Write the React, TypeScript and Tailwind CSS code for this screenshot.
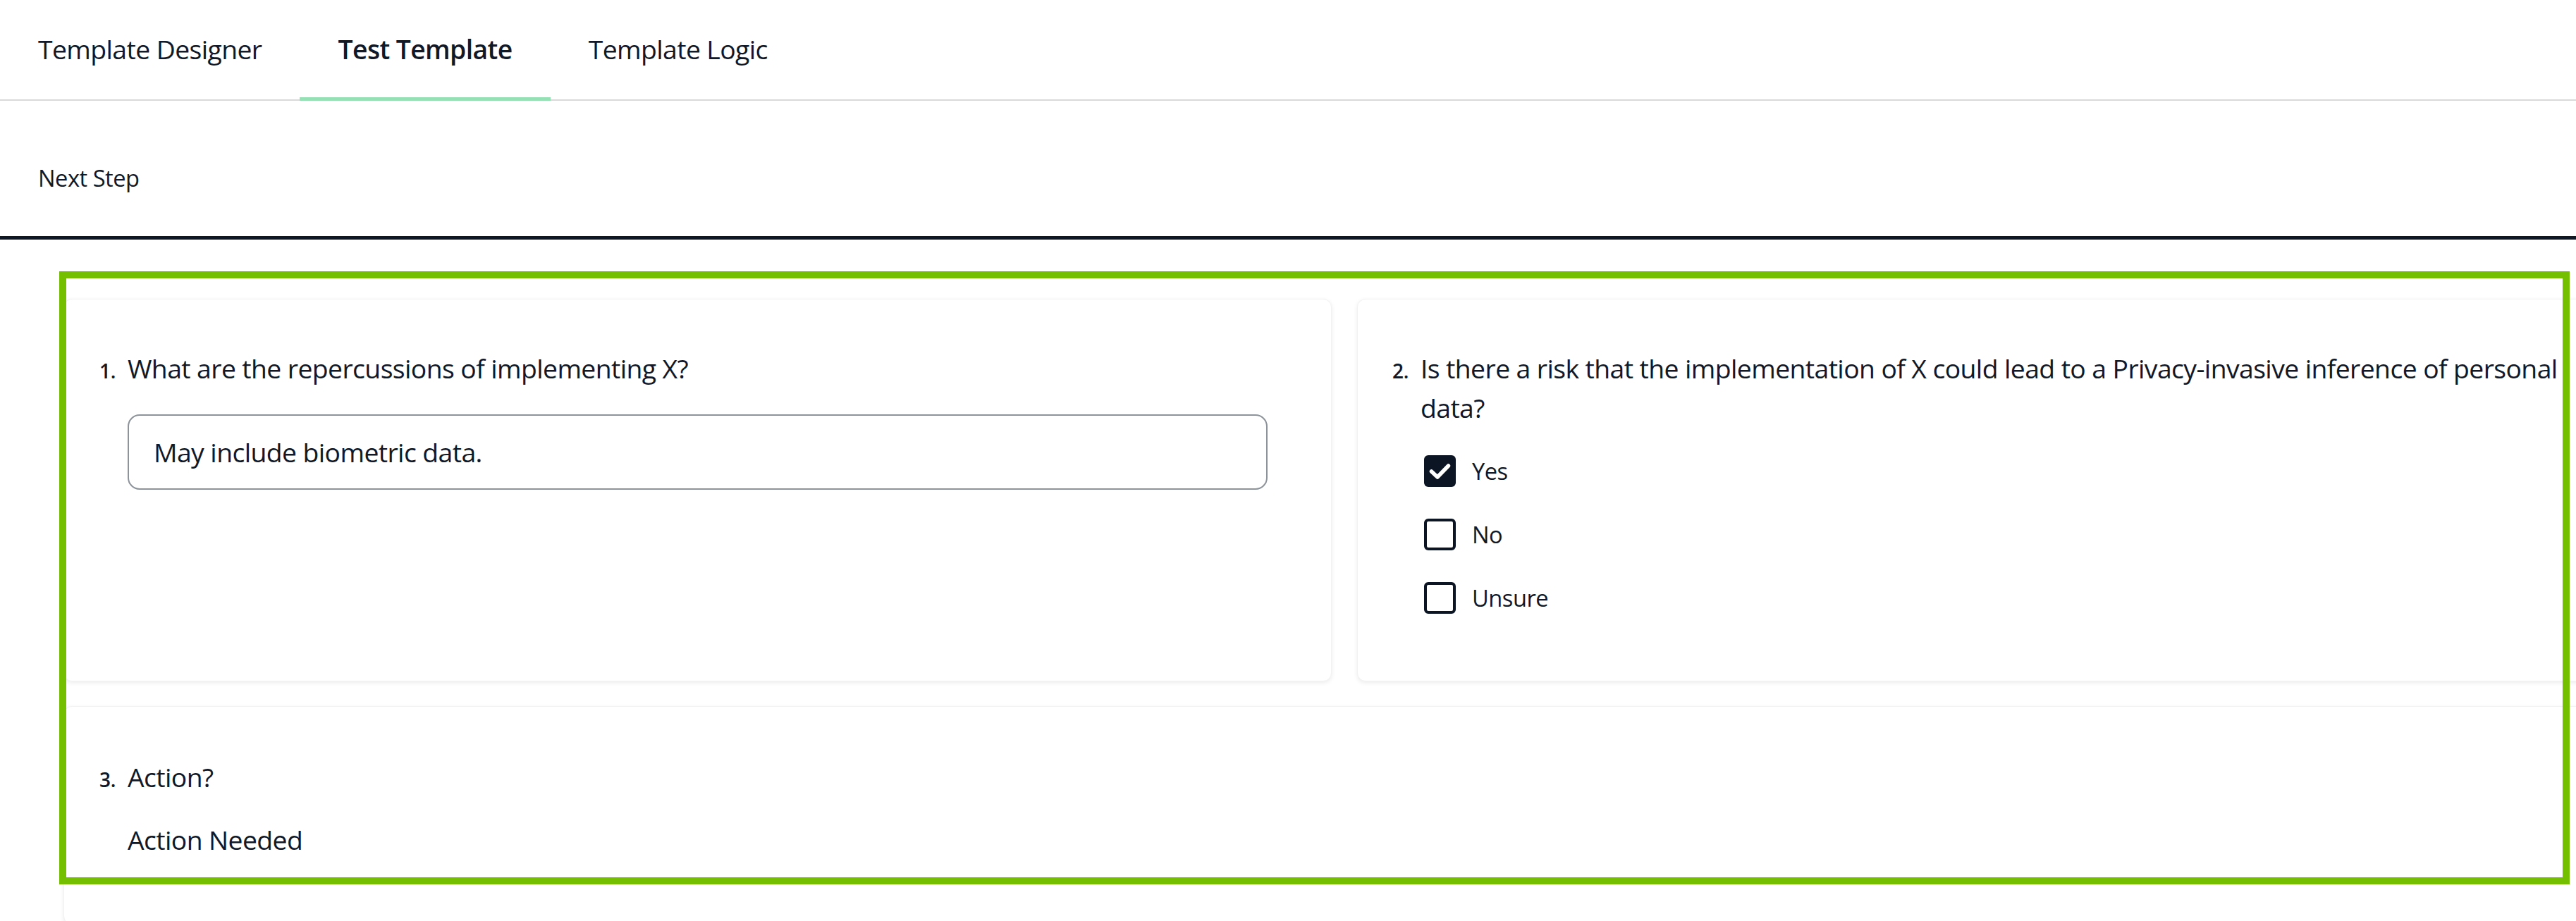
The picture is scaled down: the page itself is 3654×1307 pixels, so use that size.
import React from "react";

function Checkbox({ checked, label }: { checked?: boolean; label: string }) {
  return (
    <div className="flex h-[45px] items-center gap-[23px]">
      {checked ? (
        <div className="h-[45px] w-[45px] rounded-[6px] bg-[#0c1524]">
          <svg viewBox="0 0 45 45" className="h-[45px] w-[45px]">
            <polyline
              points="10.5,23 19,31 34.5,15"
              fill="none"
              stroke="#ffffff"
              strokeWidth="5.5"
              strokeLinecap="round"
              strokeLinejoin="round"
            />
          </svg>
        </div>
      ) : (
        <div className="box-border h-[45px] w-[45px] rounded-[6px] border-[4px] border-[#0c1524] bg-white" />
      )}
      <span className="text-[32.67px] leading-[45px] tracking-[-0.5px] text-[#111827]">{label}</span>
    </div>
  );
}

function Question({ n, children }: { n: number; children: React.ReactNode }) {
  return (
    <div className="flex items-baseline">
      <span className="w-[40px] shrink-0 text-[28px] font-semibold tracking-[-0.4px] text-[#111827]">{n}.</span>
      <span className="text-[37.33px] leading-[56px] tracking-[-0.6px] text-[#111827]">{children}</span>
    </div>
  );
}

export default function App() {
  return (
    <div
      className="relative min-h-[1307px] w-full overflow-hidden bg-white"
      style={{ fontFamily: '"Open Sans", "Noto Sans", sans-serif' }}
    >
      {/* Tabs */}
      <div className="flex border-b-[2px] border-[#d9d9d9]">
        <div className="px-[54px] pt-[42px] pb-[43px] text-[37.33px] leading-[56px] tracking-[-0.6px] text-[#111827]">
          Template Designer
        </div>
        <div className="relative px-[54px] pt-[42px] pb-[43px] text-[37.33px] font-semibold leading-[56px] tracking-[-0.6px] text-[#111827]">
          Test Template
          <div className="absolute bottom-[-2px] left-0 right-0 h-[5px] bg-[#95e1b5]" />
        </div>
        <div className="px-[54px] pt-[42px] pb-[43px] text-[37.33px] leading-[56px] tracking-[-0.6px] text-[#111827]">
          Template Logic
        </div>
      </div>

      {/* Next step bar */}
      <div className="border-b-[5px] border-[#0e1726] pl-[54px] pt-[85px] pb-[58px] text-[32.67px] leading-[49px] tracking-[-0.5px] text-[#111827]">
        Next Step
      </div>

      {/* Content */}
      <div className="flex w-[3634px] flex-col gap-[35px] pl-[90px] pt-[84px]">
        <div className="flex gap-[36px]">
          <div className="w-[1799px] shrink-0 rounded-[12px] border border-[#f2f2f2] bg-white px-[50px] pt-[70px] shadow-[0_2px_6px_rgba(0,0,0,0.08)]">
            <Question n={1}>What are the repercussions of implementing X?</Question>
            <div className="ml-[40px] mt-[37px] flex h-[107px] w-[1617px] items-center rounded-[17px] border-[2px] border-[#8c939b] px-[35px] text-[37.33px] leading-[56px] tracking-[-0.6px] text-[#111827]">
              May include biometric data.
            </div>
          </div>
          <div className="w-[1799px] shrink-0 rounded-[12px] border border-[#f2f2f2] bg-white pl-[49px] pr-[50px] pt-[70px] pb-[95px] shadow-[0_2px_6px_rgba(0,0,0,0.08)]">
            <Question n={2}>
              Is there a risk that the implementation of X could lead to a Privacy-invasive inference of personal data?
            </Question>
            <div className="ml-[45px] mt-[39px] flex flex-col gap-[45px]">
              <Checkbox checked label="Yes" />
              <Checkbox label="No" />
              <Checkbox label="Unsure" />
            </div>
          </div>
        </div>

        <div className="h-[310px] w-[3634px] rounded-[12px] border border-[#f2f2f2] bg-white px-[50px] pt-[72px] shadow-[0_2px_6px_rgba(0,0,0,0.08)]">
          <Question n={3}>Action?</Question>
          <div className="ml-[40px] mt-[33px] text-[37.33px] leading-[56px] tracking-[-0.6px] text-[#111827]">Action Needed</div>
        </div>
      </div>

      {/* Highlight overlay */}
      <div className="pointer-events-none absolute left-[84px] top-[385px] h-[870px] w-[3561px] border-[10px] border-[#74bf00]" />
    </div>
  );
}
